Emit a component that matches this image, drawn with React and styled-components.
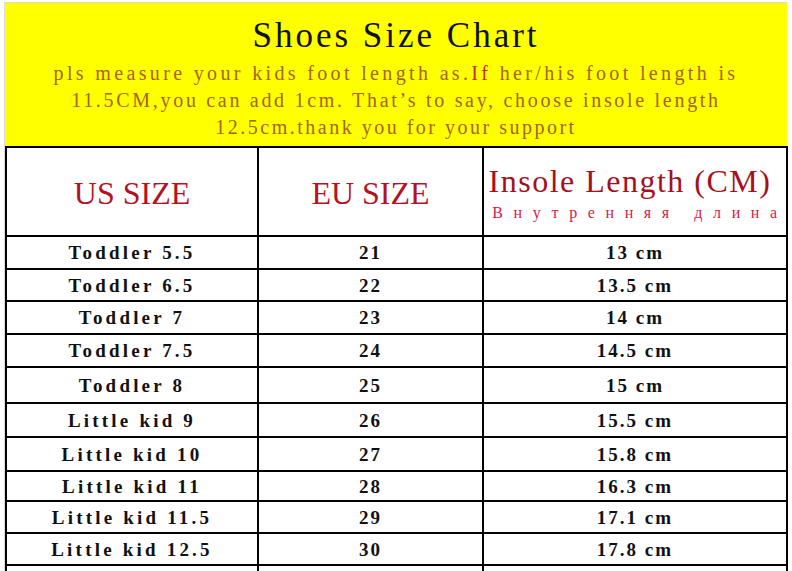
import React from 'react'
import styled, {createGlobalStyle} from "styled-components";

const rows = [
    ["Toddler 5.5", "21", "13 cm"],
    ["Toddler 6.5", "22", "13.5 cm"],
    ["Toddler 7", "23", "14 cm"],
    ["Toddler 7.5", "24", "14.5 cm"],
    ["Toddler 8", "25", "15 cm"],
    ["Little kid 9", "26", "15.5 cm"],
    ["Little kid 10", "27", "15.8 cm"],
    ["Little kid 11", "28", "16.3 cm"],
    ["Little kid 11.5", "29", "17.1 cm"],
    ["Little kid 12.5", "30", "17.8 cm"],
    ["", "", ""],
];

function App() {
  return (
    <Sheet>
        <GlobalStyle />
        <Frame>
            <Banner>
                <Title>Shoes Size Chart</Title>
                <Note $ls={3.35}>pls measure your kids foot length as.<Red>If</Red> her/his foot length is</Note>
                <Note $ls={2.7}>11.5CM,you can add 1cm. That’s to say, choose insole length</Note>
                <Note $ls={2.5}>12.5cm.thank you for your support</Note>
            </Banner>
            <Grid>
                <HeadCell><HeadText>US SIZE</HeadText></HeadCell>
                <HeadCell><HeadText>EU SIZE</HeadText></HeadCell>
                <HeadCell>
                    <HeadText $dark>Insole Length (CM)</HeadText>
                    <Russian>Внутренняя длина</Russian>
                </HeadCell>
                {rows.map((r, i) => (
                    <React.Fragment key={i}>
                        {r.map((v, j) => <Cell key={j} $wide={j === 0}>{v}</Cell>)}
                    </React.Fragment>
                ))}
            </Grid>
        </Frame>
    </Sheet>
  )
}

const GlobalStyle = createGlobalStyle`
    html, body{
        margin: 0;
        overflow: hidden;
        background: #fff;
    }
`;

const Sheet = styled.div`
    padding: 2px 0 0 4px;
`;

const Frame = styled.div`
    border-top: 1px solid #dadada;
    border-left: 1px solid #dadada;
    width: fit-content;
`;

const Banner = styled.div`
    width: 782px;
    height: 143px;
    box-sizing: border-box;
    background: #ffff00;
    padding-top: 13px;
    text-align: center;
    font-family: "Liberation Serif", serif;
`;

const Title = styled.div`
    font-size: 35px;
    line-height: 40px;
    letter-spacing: 3px;
    margin-bottom: 4px;
    color: #111;
`;

const Note = styled.div`
    font-size: 20px;
    line-height: 27px;
    letter-spacing: ${p => p.$ls}px;
    color: #a3651a;
`;

const Red = styled.span`
    color: #c0301c;
`;

const Grid = styled.div`
    display: grid;
    grid-template-columns: 250px 223px 302px;
    grid-template-rows: 87px 31px 30px 31px 31px 34px 32px 32px 28px 30px 30px 30px;
    gap: 2px;
    padding: 2px;
    background: #000;
    width: fit-content;
`;

const HeadCell = styled.div`
    background: #fff;
    display: flex;
    flex-direction: column;
    align-items: center;
    justify-content: center;
    padding-top: 3px;
    box-sizing: border-box;
    gap: 6px;
`;

const HeadText = styled.div`
    font-family: "Liberation Serif", serif;
    font-size: 32px;
    line-height: 34px;
    letter-spacing: ${p => p.$dark ? "1.5px" : "0"};
    padding-right: ${p => p.$dark ? "10px" : "0"};
    color: ${p => p.$dark ? "#a5111d" : "#b3121f"};
    white-space: nowrap;
`;

const Russian = styled.div`
    font-family: "Liberation Serif", serif;
    font-size: 16px;
    line-height: 18px;
    letter-spacing: 10.6px;
    padding-left: 10px;
    color: #d6184a;
    white-space: nowrap;
`;

const Cell = styled.div`
    background: #fff;
    display: flex;
    align-items: center;
    justify-content: center;
    padding-top: 1px;
    box-sizing: border-box;
    font-family: "Liberation Serif", serif;
    font-weight: 700;
    font-size: 19px;
    line-height: 20px;
    letter-spacing: ${p => p.$wide ? "3.2px" : "2px"};
    color: #111;
    white-space: pre;
`;

export default App
